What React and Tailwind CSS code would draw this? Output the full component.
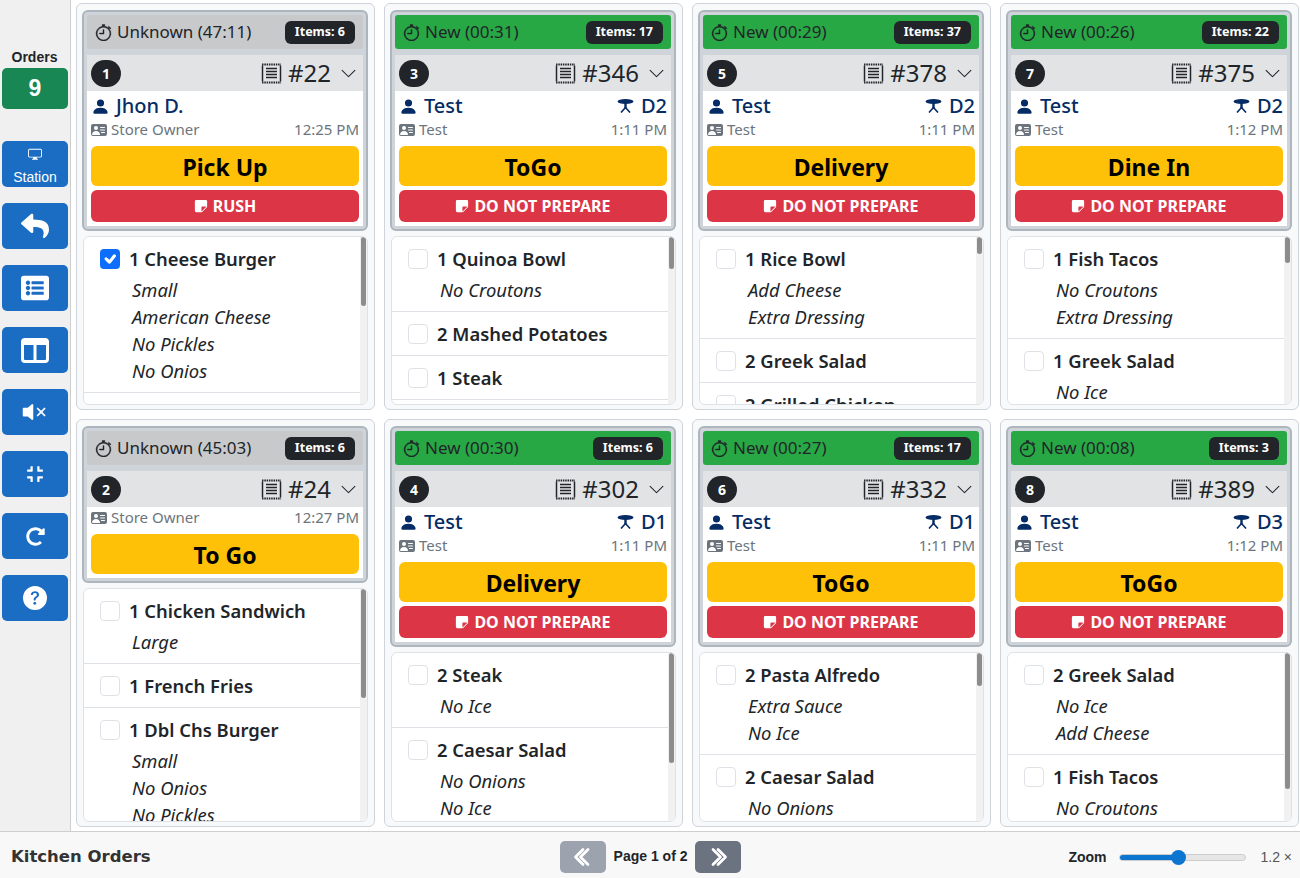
import { BsStopwatch, BsChevronDown, BsPersonFill, BsPersonVcardFill, BsStickyFill, BsDisplay, BsVolumeMuteFill, BsQuestionCircleFill, BsChevronDoubleLeft, BsChevronDoubleRight, BsCheck } from 'react-icons/bs';
import { FaListAlt, FaCompress, FaRedoAlt, FaReply } from 'react-icons/fa';

const ORDERS = [
  {
    seq: 1, status: 'Unknown (47:11)', count: 6, no: '#22', name: 'Jhon D.', owner: 'Store Owner', time: '12:25 PM', type: 'Pick Up', note: 'RUSH', thumb: 69,
    items: [
      { label: '1 Cheese Burger', mods: ['Small', 'American Cheese', 'No Pickles', 'No Onios'], done: true },
      { label: '', mods: [] },
    ],
  },
  {
    seq: 3, status: 'New (00:31)', count: 17, no: '#346', name: 'Test', table: 'D2', owner: 'Test', time: '1:11 PM', type: 'ToGo', note: 'DO NOT PREPARE', thumb: 32,
    items: [
      { label: '1 Quinoa Bowl', mods: ['No Croutons'] },
      { label: '2 Mashed Potatoes', mods: [] },
      { label: '1 Steak', mods: [] },
    ],
  },
  {
    seq: 5, status: 'New (00:29)', count: 37, no: '#378', name: 'Test', table: 'D2', owner: 'Test', time: '1:11 PM', type: 'Delivery', note: 'DO NOT PREPARE', thumb: 17,
    items: [
      { label: '1 Rice Bowl', mods: ['Add Cheese', 'Extra Dressing'] },
      { label: '2 Greek Salad', mods: [] },
      { label: '2 Grilled Chicken', mods: [] },
    ],
  },
  {
    seq: 7, status: 'New (00:26)', count: 22, no: '#375', name: 'Test', table: 'D2', owner: 'Test', time: '1:12 PM', type: 'Dine In', note: 'DO NOT PREPARE', thumb: 26,
    items: [
      { label: '1 Fish Tacos', mods: ['No Croutons', 'Extra Dressing'] },
      { label: '1 Greek Salad', mods: ['No Ice'] },
    ],
  },
  {
    seq: 2, status: 'Unknown (45:03)', count: 6, no: '#24', owner: 'Store Owner', time: '12:27 PM', type: 'To Go', thumb: 109,
    items: [
      { label: '1 Chicken Sandwich', mods: ['Large'] },
      { label: '1 French Fries', mods: [] },
      { label: '1 Dbl Chs Burger', mods: ['Small', 'No Onios', 'No Pickles'] },
    ],
  },
  {
    seq: 4, status: 'New (00:30)', count: 6, no: '#302', name: 'Test', table: 'D1', owner: 'Test', time: '1:11 PM', type: 'Delivery', note: 'DO NOT PREPARE', thumb: 110,
    items: [
      { label: '2 Steak', mods: ['No Ice'] },
      { label: '2 Caesar Salad', mods: ['No Onions', 'No Ice'] },
    ],
  },
  {
    seq: 6, status: 'New (00:27)', count: 17, no: '#332', name: 'Test', table: 'D1', owner: 'Test', time: '1:11 PM', type: 'ToGo', note: 'DO NOT PREPARE', thumb: 33,
    items: [
      { label: '2 Pasta Alfredo', mods: ['Extra Sauce', 'No Ice'] },
      { label: '2 Caesar Salad', mods: ['No Onions'] },
    ],
  },
  {
    seq: 8, status: 'New (00:08)', count: 3, no: '#389', name: 'Test', table: 'D3', owner: 'Test', time: '1:12 PM', type: 'ToGo', note: 'DO NOT PREPARE', thumb: 136,
    items: [
      { label: '2 Greek Salad', mods: ['No Ice', 'Add Cheese'] },
      { label: '1 Fish Tacos', mods: ['No Croutons'] },
    ],
  },
];

const SideButton = ({ children }) => (
  <button className="flex h-[46px] w-[66px] flex-col items-center justify-center rounded-[5px] bg-[#1a6dc3] text-white">
    {children}
  </button>
);

const ColumnsIcon = () => (
  <svg width="28" height="25" viewBox="0 0 28 25" fill="none">
    <rect x="1.5" y="1.5" width="25" height="22" rx="2.5" stroke="white" strokeWidth="3" />
    <rect x="12.5" y="1" width="3" height="23" fill="white" />
    <rect x="1" y="1" width="26" height="6" rx="2" fill="white" />
  </svg>
);

const ReceiptIcon = () => (
  <svg width="21" height="21" viewBox="0 0 21 21" fill="none" stroke="currentColor">
    <path d="M1.500 2.500v16M19.500 2.500v16" strokeWidth="1.500" />
    <path d="M1 1.500h19M1 19.500h19" strokeWidth="2.200" strokeDasharray="1.500 .8" />
    <path d="M5 5.500h11M5 8.500h11M5 11.500h11M5 14.500h11" strokeWidth="1.500" />
  </svg>
);

const TableIcon = () => (
  <svg width="17" height="14" viewBox="0 0 17 14" fill="currentColor">
    <ellipse cx="8.500" cy="2.600" rx="8" ry="2.500" />
    <rect x="7.300" y="4" width="2.400" height="6" />
    <path d="M8.500 8.500 4 13.500M8.500 8.500l4.500 5" fill="none" stroke="currentColor" strokeWidth="1.600" />
  </svg>
);

const ItemRow = ({ item }) => (
  <div className={`border-b border-[#dee2e6] pl-[16px] pt-[10px] ${item.mods.length > 0 ? 'pb-[8px]' : 'pb-[9px]'}`}>
    <div className="flex h-[24px] items-center">
      {item.done ? (
        <span className="flex h-[20px] w-[20px] items-center justify-center rounded-[4px] bg-[#0d6efd] text-white">
          <BsCheck size={20} strokeWidth={1} />
        </span>
      ) : (
        <span className="h-[20px] w-[20px] rounded-[4px] border border-[#dee2e6] bg-white" />
      )}
      <span className="ml-[9px] whitespace-nowrap text-[18.4px] font-semibold text-[#212529]">{item.label}</span>
    </div>
    {item.mods.length > 0 && (
      <div className="mt-[5px] pl-[32px]">
        {item.mods.map((mod) => (
          <div key={mod} className="h-[27px] whitespace-nowrap text-[18.4px] italic leading-[27px] text-[#212529]">{mod}</div>
        ))}
      </div>
    )}
  </div>
);

const OrderCard = ({ order }) => {
  const isNew = order.status.startsWith('New');
  return (
    <div className="flex min-h-0 flex-col gap-[5px] overflow-hidden rounded-[6px] border border-[#ced4da] bg-[#f8f9fa] pb-[4px] pl-[5px] pr-[6px] pt-[6px]">
      <div className="shrink-0 rounded-[6px] border-2 border-[#adb5bd] bg-[#ced4da] p-[3px]">
        <div className={`flex h-[34px] items-center justify-between rounded-[3px] pl-[8px] pr-[8px] ${isNew ? 'bg-[#28a745]' : 'bg-[#c8c9cb]'}`}>
          <div className="flex items-center gap-[5px] text-[17px] text-[#212529]">
            <BsStopwatch size={17} strokeWidth={0.4} />
            <span>{order.status}</span>
          </div>
          <span className="flex h-[23px] items-center justify-center whitespace-nowrap rounded-[6px] bg-[#212529] px-[10px] text-[12.5px] font-bold text-white">Items: {order.count}</span>
        </div>
        <div className="mt-[6px] flex h-[36px] items-center justify-between bg-[#e2e3e5] pl-[4px] pr-[6px]">
          <span className="flex h-[27px] w-[30px] items-center justify-center rounded-full bg-[#212529] text-[14px] font-bold text-white">{order.seq}</span>
          <div className="flex items-center text-[#212529]">
            <ReceiptIcon />
            <span className="ml-[6px] text-[24px] leading-none">{order.no}</span>
            <BsChevronDown size={17} className="ml-[9px]" />
          </div>
        </div>
        <div className={`flex flex-col bg-white px-[4px] pb-[4px] ${order.name ? 'pt-[2px]' : ''}`}>
          {order.name && (
            <div className="flex h-[26px] items-center justify-between text-[20px] font-medium text-[#052c65]">
              <div className="flex items-center gap-[6px]">
                <BsPersonFill size={19} />
                <span>{order.name}</span>
              </div>
              {order.table && (
                <div className="flex items-center gap-[7px]">
                  <TableIcon />
                  <span>{order.table}</span>
                </div>
              )}
            </div>
          )}
          <div className="flex h-[21px] items-center justify-between text-[15px] text-[#6c757d]">
            <div className="flex items-center gap-[4px]">
              <BsPersonVcardFill size={16} />
              <span>{order.owner}</span>
            </div>
            <span>{order.time}</span>
          </div>
          <div className="mt-[6px] flex h-[40px] items-center justify-center rounded-[6px] bg-[#ffc107] pt-[2px] text-[23px] font-bold text-black">{order.type}</div>
          {order.note && (
            <div className="mt-[4px] flex h-[32px] items-center justify-center gap-[5px] rounded-[6px] bg-[#dc3545] text-[16px] font-bold text-white">
              <BsStickyFill size={14} />
              <span>{order.note}</span>
            </div>
          )}
        </div>
      </div>
      <div className="ml-[1px] flex min-h-0 flex-1 overflow-hidden rounded-[6px] border border-[#dee2e6] bg-white">
        <div className="min-w-0 flex-1 overflow-hidden">
          {order.items.map((item, index) => (
            <ItemRow key={index} item={item} />
          ))}
        </div>
        <div className="w-[7px] shrink-0 bg-[#f1f1f1]">
          <div className="mx-auto w-[5px] rounded-[3px] bg-[#8c8c8c]" style={{ height: order.thumb }} />
        </div>
      </div>
    </div>
  );
};

export default function App() {
  return (
    <div className="flex h-[878px] w-[1300px] flex-col overflow-hidden bg-white font-['Noto_Sans',sans-serif]">
      <div className="flex min-h-0 flex-1">
        <aside className="flex w-[71px] shrink-0 flex-col border-r border-[#cfcfcf] bg-[#f0f0f0] pl-[2px] pt-[50px] font-['Liberation_Sans',sans-serif]">
          <div className="pr-[3px] text-center text-[14px] font-bold leading-[14px] text-[#212529]">Orders</div>
          <div className="mt-[4px] flex h-[41px] w-[66px] items-center justify-center rounded-[5px] bg-[#198754] text-[23px] font-bold text-white">9</div>
          <div className="mt-[32px] flex flex-col gap-[16px]">
            <SideButton>
              <span className="flex flex-col items-center pt-[4px]">
                <BsDisplay size={14} />
                <span className="mt-[8px] text-[14px] leading-[16px]">Station</span>
              </span>
            </SideButton>
            <SideButton><FaReply size={28} /></SideButton>
            <SideButton><FaListAlt size={28} /></SideButton>
            <SideButton><ColumnsIcon /></SideButton>
            <SideButton><BsVolumeMuteFill size={28} /></SideButton>
            <SideButton><FaCompress size={18} /></SideButton>
            <SideButton><FaRedoAlt size={19} /></SideButton>
            <SideButton><BsQuestionCircleFill size={24} /></SideButton>
          </div>
        </aside>
        <main className="grid min-w-0 flex-1 grid-cols-[repeat(4,299px)] grid-rows-[407px_408px] gap-[9px] pl-[5px] pt-[3px]">
          {ORDERS.map((order) => (
            <OrderCard key={order.seq} order={order} />
          ))}
        </main>
      </div>
      <footer className="flex h-[47px] shrink-0 items-center border-t border-[#cfcfcf] bg-[#f8f8f8] pt-[4px] font-['Liberation_Sans',sans-serif]">
        <div className="flex-1 pl-[11px] font-['DejaVu_Sans',sans-serif] text-[16.500px] font-bold text-[#333]">Kitchen Orders</div>
        <div className="flex items-center">
          <button className="flex h-[32px] w-[46px] items-center justify-center rounded-[5px] bg-[#9ca3af] text-white"><BsChevronDoubleLeft size={20} strokeWidth={1.2} /></button>
          <span className="mx-[8px] pb-[2px] text-[14px] font-bold text-[#212529]">Page 1 of 2</span>
          <button className="flex h-[32px] w-[46px] items-center justify-center rounded-[5px] bg-[#6b7280] text-white"><BsChevronDoubleRight size={20} strokeWidth={1.2} /></button>
        </div>
        <div className="flex flex-1 items-center justify-end pr-[10px]">
          <span className="text-[14px] font-bold text-[#212529]">Zoom</span>
          <div className="relative ml-[13px] h-[7px] w-[127px] rounded-full border border-[#ccc] bg-[#e6e6e6]">
            <div className="h-full w-[59px] rounded-full bg-[#0b75d0]" />
            <div className="absolute left-[51px] top-[-5px] h-[15px] w-[15px] rounded-full bg-[#0b75d0]" />
          </div>
          <span className="-mr-[2px] ml-[14px] text-[14px] text-[#555]">1.2 ×</span>
        </div>
      </footer>
    </div>
  );
}
